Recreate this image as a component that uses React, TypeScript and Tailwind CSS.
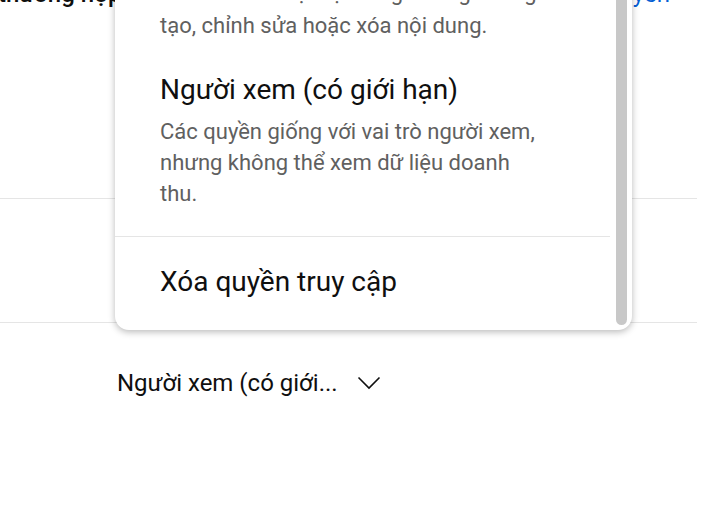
import { useState } from 'react';

const roles = [
  {
    id: 'viewer',
    lines: ['Có thể xem mọi nội dung nhưng không thể', 'tạo, chỉnh sửa hoặc xóa nội dung.'],
  },
];

function Chevron() {
  return (
    <svg width="24" height="14" viewBox="0 0 24 14" fill="none" className="ml-[19px]">
      <path d="M1.5 1.5 L12 12 L22.5 1.5" stroke="#0f0f0f" strokeWidth="1.6" />
    </svg>
  );
}

export default function App() {
  const [selected] = useState('viewer-limited');

  return (
    <div className="relative h-[515px] w-[720px] overflow-hidden bg-white font-['Roboto',sans-serif] text-[#0f0f0f]">
      <div className="w-[697px]">
        {/* Intro paragraph (scrolled off the top) */}
        <div className="-mt-[22px] h-[221px] border-b border-[#e5e5e5]">
          <div className="flex h-[32px] items-center text-[24px] leading-[32px]">
            <span className="-ml-[2px] font-medium">thường hợp</span>
            <span className="ml-auto mr-[27px] text-[#065fd4]">quyền</span>
          </div>
        </div>

        {/* Member row */}
        <div className="h-[124px] border-b border-[#e5e5e5]" />

        {/* Role picker */}
        <div className="mt-[44px] flex items-center pl-[117px]">
          <span className="text-[24px] leading-[32px]">Người xem (có giới...</span>
          <Chevron />
        </div>
      </div>

      {/* Role dropdown menu */}
      <div className="absolute left-[115px] top-[-22px] h-[352px] w-[517px] overflow-hidden rounded-b-[14px] bg-white shadow-[0_2px_7px_rgba(0,0,0,0.28)]">
        <div className="pl-[45px]">
          {roles.map((r) => (
            <div key={r.id} className="text-[22px] leading-[30px] text-[#606060]">
              {r.lines.map((l, i) => (
                <p key={l} className={i === 0 ? 'whitespace-nowrap' : 'whitespace-nowrap pt-[3px]'}>
                  {l}
                </p>
              ))}
            </div>
          ))}
          <div className={selected === 'viewer-limited' ? 'mt-[32px]' : 'mt-[32px]'}>
            <p className="text-[28px] leading-[34px]">Người xem (có giới hạn)</p>
            <p className="mt-[9px] max-w-[380px] text-[22px] leading-[31px] text-[#606060]">
              Các quyền giống với vai trò người xem, nhưng không thể xem dữ liệu doanh thu.
            </p>
          </div>
        </div>
        <div className="mr-[22px] mt-[27px] h-px bg-[#e5e5e5]" />
        <p className="mt-[28px] pl-[45px] text-[28px] leading-[34px]">Xóa quyền truy cập</p>

        {/* scrollbar */}
        <div className="absolute bottom-[5px] right-[5px] top-0 w-[11px] rounded-b-full bg-[#c8c8c8]" />
      </div>
    </div>
  );
}
